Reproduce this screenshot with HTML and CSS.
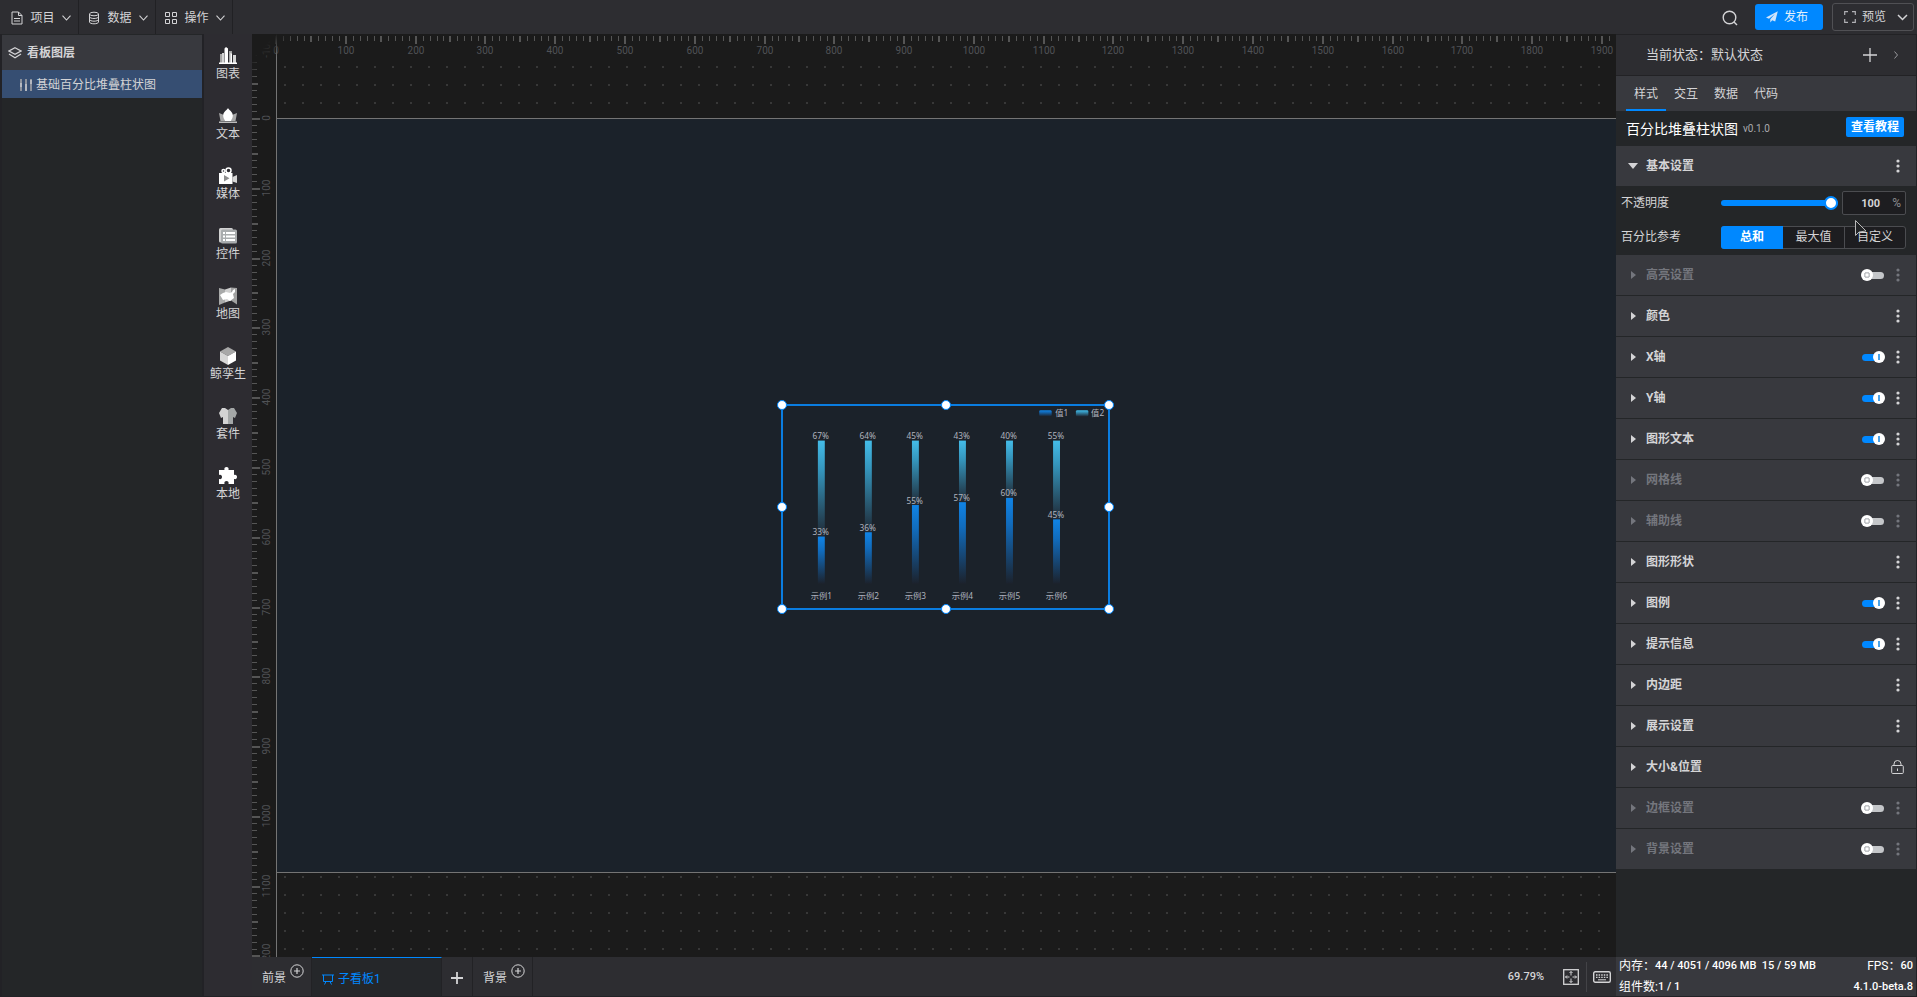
FILE: index.html
```html
<!DOCTYPE html>
<html lang="zh-CN">
<head>
<meta charset="utf-8">
<title>看板编辑器</title>
<link rel="stylesheet" href="styles.css">
</head>
<body>
<svg class="defs" width="0" height="0" aria-hidden="true">
  <defs>
    <symbol id="chevron" viewBox="0 0 9 6"><path d="M.5.7 4.5 5 8.5.7" fill="none" stroke="currentColor" stroke-width="1.1"/></symbol>
    <symbol id="more" viewBox="0 0 4 14"><circle cx="2" cy="2" r="1.6"/><circle cx="2" cy="7" r="1.6"/><circle cx="2" cy="12" r="1.6"/></symbol>
    <symbol id="plus-circle" viewBox="0 0 14 14"><g fill="none" stroke="currentColor"><circle cx="7" cy="7" r="6.2"/><path d="M7 4v6M4 7h6" stroke-width="1.2"/></g></symbol>
  </defs>
</svg>

<header class="topbar">
  <nav class="menus">
    <button class="menu"><svg width="12" height="14" viewBox="0 0 12 14" fill="none" stroke="currentColor"><path d="M1 1h6.5L11 4.5V13H1zM7.500 1v3.500H11M3 7.500h6M3 10h6"/></svg>项目<svg width="9" height="6"><use href="#chevron"/></svg></button>
    <button class="menu"><svg width="12" height="14" viewBox="0 0 12 14" fill="none" stroke="currentColor"><ellipse cx="6" cy="3" rx="4.500" ry="1.800"/><path d="M1.500 3v8c0 1 2 1.800 4.500 1.800s4.500-.8 4.500-1.800V3M1.500 5.700c0 1 2 1.800 4.500 1.800s4.500-.8 4.500-1.800M1.500 8.400c0 1 2 1.800 4.500 1.800s4.500-.8 4.500-1.800"/></svg>数据<svg width="9" height="6"><use href="#chevron"/></svg></button>
    <button class="menu"><svg width="12" height="12" viewBox="0 0 12 12" fill="none" stroke="currentColor"><path d="M.5.5h4v4h-4zM7.500.5h4v4h-4zM.5 7.500h4v4h-4zM7.500 7.500h4v4h-4z"/></svg>操作<svg width="9" height="6"><use href="#chevron"/></svg></button>
  </nav>
  <div class="actions">
    <button class="icon-btn" aria-label="搜索"><svg width="16" height="16" viewBox="0 0 16 16" fill="none" stroke="currentColor" stroke-width="1.400"><circle cx="7.500" cy="7.500" r="6.300"/><path d="m12 12 3 3"/></svg></button>
    <button class="publish"><svg width="12" height="12" viewBox="0 0 12 12" fill="#cfe4fa"><path d="M11.800.3 0 6.500l3 1.200 5.800-4.700-4.500 5.200v3.300l1.900-2.300 3 1.300z"/></svg>发布</button>
    <button class="preview"><svg width="12" height="12" viewBox="0 0 12 12" fill="none" stroke="#b0b0b4" stroke-width="1.200"><path d="M.7 4V.7H4M8 .7h3.300V4M11.300 8v3.300H8M4 11.300H.7V8"/></svg>预览<svg class="caret" width="11" height="7" viewBox="0 0 11 7" fill="none" stroke="currentColor" stroke-width="1.500"><path d="m1 1 4.500 4.500L10 1"/></svg></button>
  </div>
</header>

<main class="workspace">
  <aside class="layers">
    <h2 class="layers-title"><svg width="14" height="12" viewBox="0 0 14 12" fill="none" stroke="currentColor"><path d="M7 .8 13 4 7 7.300 1 4z M1 7l6 3.700L13 7" stroke-width="1.200"/></svg>看板图层</h2>
    <button class="layer"><svg width="12" height="12" viewBox="0 0 12 12"><path fill="#8b919c" d="M0 0h2v12H0zM5 0h2v12H5zM10 0h2v12h-2z"/><path fill="#b4b8c0" d="M0 4h2v4H0zM5 5h2v7H5zM10 1h2v4h-2z"/></svg>基础百分比堆叠柱状图</button>
  </aside>

  <nav class="rail">
    <button><svg width="18" height="18" viewBox="0 0 18 18"><path fill="#a5a5a5" d="M1 7h3v9H1zM10 4h3v12h-3z"/><path fill="#d5d5d5" d="M3 6h2v10H3zM14 8h3v8h-3z"/><path fill="#fff" d="M5.500 1.500 7 0l2 1.500V16H5.500zM11.500 5.500 13 7v9h-1.500zM0 15.500h18V17H0z"/></svg>图表</button>
    <button><svg width="18" height="18" viewBox="0 0 18 18"><path fill="#a8a8a8" d="m0 6 5 2 1 6H1.500zM18 6l-5 2-1 6h4.500z"/><path fill="#fff" d="M9 1c.8 2 4.800 3.500 4.800 7.500 0 2-.8 3.500-1.800 5.500H6c-1-2-1.800-3.500-1.800-5.500C4.200 4.500 8.200 3 9 1z"/><path fill="#bcbcbc" d="M0 14.500h18V16H0z"/></svg>文本</button>
    <button><svg width="18" height="18" viewBox="0 0 18 18"><g fill="none" stroke="#fff" stroke-width="1.500"><circle cx="4.500" cy="4" r="1.500"/><circle cx="9.500" cy="3.500" r="2.500"/></g><path fill="#fff" d="M0 6h13.500v11H0z"/><path fill="#d5d5d5" d="m13.500 10 4.500-2v8l-4.500-1.500z"/><path fill="#8d8d8d" d="m5 8 5.500 3.200L5 14.500z"/></svg>媒体</button>
    <button><svg width="18" height="18" viewBox="0 0 18 18"><rect y="1" width="14" height="14.500" rx="1.500" fill="#d2d2d2"/><rect x="2" y="2.500" width="16" height="14" rx="1.500" fill="#a9acad"/><path fill="#fff" d="M4 5h2v2H4zM7 5h9v2H7zM4 8.500h2v2H4zM7 8.500h9v2H7zM4 12h2v2H4zM7 12h9v2H7z"/></svg>控件</button>
    <button><svg width="18" height="18" viewBox="0 0 18 18"><path fill="#a9aaaa" d="m0 1 6 1.500v13L0 18z"/><path fill="#d0d0d0" d="m6 2.500 6-2v13l-6 2z"/><path fill="#a1a1a1" d="m12 .5 6 .5v16.500l-6-4z"/><path fill="#fff" d="m1 8 3-2 3-1 4 1 2-1 1-2 2-1v3l-2 2 1 4-4 3-3-2-4 1z"/></svg>地图</button>
    <button><svg width="18" height="18" viewBox="0 0 18 18"><path fill="#a8a8a8" d="m9 0 8 4.500L9 9 1 4.500z"/><path fill="#d6d6d6" d="M1 4.500 9 9v9l-8-4.500z"/><path fill="#fff" d="m17 4.500-8 4.500v9l8-4.500z"/></svg>鲸孪生</button>
    <button><svg width="18" height="18" viewBox="0 0 18 18"><path fill="#d3d3d3" d="m6 1 3 2v14H4V10L2 11 0 6l3-5z"/><path fill="#a4a7a7" d="m12 1-3 2v14h5V10l2 1 2-5-3-5z"/></svg>套件</button>
    <button><svg width="18" height="18" viewBox="0 0 18 18"><path fill="#fff" d="M0 3h5.500c-.6-2 .5-3 2-3s2.600 1 2 3H15v5c2-.6 3 .5 3 2s-1 2.600-3 2v5H9.500c.6-2-.5-3-2-3s-2.600 1-2 3H0v-5c2 .6 3-.5 3-2S2 7.400 0 8z"/></svg>本地</button>
  </nav>

  <section class="editor">
    <div class="stage">
      <div class="grid-dots"></div>
      <div class="artboard"></div>
      <svg class="ruler ruler-x" id="ruler-x" aria-hidden="true"></svg>
      <svg class="ruler ruler-y" id="ruler-y" aria-hidden="true"></svg>
      <div class="ruler-corner"></div>
      <div class="widget">
        <svg class="chart" id="chart" viewBox="0 0 469 292">
          <defs>
            <linearGradient id="g1" x1="0" y1="0" x2="0" y2="1"><stop offset="0" stop-color="#1084e6"/><stop offset=".3" stop-color="#116cbd"/><stop offset="1" stop-color="#1c222c"/></linearGradient>
            <linearGradient id="g2" x1="0" y1="0" x2="0" y2="1"><stop offset="0" stop-color="#44bce8"/><stop offset=".3" stop-color="#3596bd"/><stop offset="1" stop-color="#1f2834"/></linearGradient>
          </defs>
          <rect x="370" y="6" width="18" height="9" rx="2" fill="url(#g1)"/><text x="393" y="15">值1</text>
          <rect x="423" y="6" width="18" height="9" rx="2" fill="url(#g2)"/><text x="445" y="15">值2</text>
        </svg>
        <i class="handle nw"></i><i class="handle n"></i><i class="handle ne"></i>
        <i class="handle w"></i><i class="handle e"></i>
        <i class="handle sw"></i><i class="handle s"></i><i class="handle se"></i>
      </div>
    </div>
    <footer class="boards">
      <button class="board">前景<svg class="add" width="14" height="14"><use href="#plus-circle"/></svg></button>
      <button class="board current"><svg width="12" height="11" viewBox="0 0 12 11" fill="none" stroke="currentColor"><path d="M0 1h12M1.500 1v6.500h9V1M4 7.500 2.500 10.500M8 7.500l1.500 3"/></svg>子看板1</button>
      <button class="board new" aria-label="新建看板"><svg width="12" height="12" viewBox="0 0 12 12" stroke="currentColor" stroke-width="1.800"><path d="M6 0v12M0 6h12"/></svg></button>
      <button class="board">背景<svg class="add" width="14" height="14"><use href="#plus-circle"/></svg></button>
      <div class="view-tools">
        <span class="zoom">69.79%</span>
        <button class="icon-btn" aria-label="适应画布"><svg width="16" height="16" viewBox="0 0 16 16" fill="none" stroke="currentColor"><rect x=".7" y=".7" width="14.600" height="14.600" stroke-width="1.300"/><path d="M8 2.500v4M8 9.500v4M2.500 8h4M9.500 8h4M6.500 4 8 2.500 9.500 4M6.500 12 8 13.500 9.500 12M4 6.500 2.500 8 4 9.500M12 6.500 13.500 8 12 9.500"/></svg></button>
        <button class="icon-btn keys" aria-label="快捷键"><svg width="18" height="12" viewBox="0 0 18 12" fill="none" stroke="currentColor"><rect x=".7" y=".7" width="16.600" height="10.600" rx="1.500" stroke-width="1.400"/><path d="M3 4h12M3 6.300h12" stroke-width="1.300" stroke-dasharray="1.500 1.100"/><path d="M5 8.800h8"/></svg></button>
      </div>
    </footer>
  </section>

  <aside class="inspector">
    <div class="state"><span>当前状态：默认状态</span>
      <button class="icon-btn" aria-label="新增状态"><svg width="14" height="14" viewBox="0 0 14 14" stroke="currentColor" stroke-width="1.300"><path d="M7 0v14M0 7h14"/></svg></button>
      <button class="icon-btn" aria-label="下一状态"><svg width="4" height="8" viewBox="0 0 4 8" fill="none" stroke="#99999c"><path d="m.5.500 3 3.500-3 3.500"/></svg></button>
    </div>
    <nav class="tabs"><button class="active">样式</button><button>交互</button><button>数据</button><button>代码</button></nav>
    <div class="component"><h1>百分比堆叠柱状图</h1><span class="version">v0.1.0</span><button class="tutorial">查看教程</button></div>
    <div class="group open"><button class="group-name">基本设置</button><button class="more" aria-label="更多"><svg width="4" height="14"><use href="#more"/></svg></button></div>
    <div class="fields">
      <label for="opacity">不透明度</label>
      <div class="opacity"><input id="opacity" type="range" min="0" max="100" value="100"><div class="number"><input type="text" value="100" aria-label="不透明度数值"><span>%</span></div></div>
      <span>百分比参考</span>
      <div class="segmented"><button class="active">总和</button><button>最大值</button><button>自定义</button></div>
      <svg class="cursor" width="15" height="20" viewBox="0 0 15 20" aria-hidden="true"><path d="M1.500 1.500v15l3.500-3.500 7-1z" fill="#222426" stroke="#b9b9b9"/></svg>
    </div>
    <div class="groups" id="groups"></div>
    <dl class="stats">
      <div><dt>内存：</dt><dd>44 / 4051 / 4096 MB&nbsp; 15 / 59 MB</dd></div><div class="end"><dt>FPS：</dt><dd>60</dd></div>
      <div><dt>组件数:</dt><dd>1 / 1</dd></div><div class="end"><dd>4.1.0-beta.8</dd></div>
    </dl>
  </aside>
</main>
<script src="app.js"></script>
</body>
</html>
```
FILE: styles.css
```css
*, *::before, *::after { box-sizing: border-box; }
body {
  margin: 0;
  height: 100vh;
  display: flex;
  flex-direction: column;
  overflow: hidden;
  background: #222226;
  color: #d4d4d6;
  font: 12px/16px Roboto, "Noto Sans CJK SC", sans-serif;
}
button, input { font: inherit; color: inherit; }
button { background: none; border: 0; padding: 0; margin: 0; white-space: nowrap; }
svg { display: block; flex: none; }
svg:not([fill]) { fill: currentColor; }
h1, h2, dl, dd { margin: 0; }
.defs { position: absolute; }
.icon-btn { display: flex; align-items: center; justify-content: center; }

/* Top bar */
.topbar { display: flex; justify-content: space-between; flex: none; height: 34px; background: #2d2d31; }
.menus { display: flex; padding-left: 2px; }
.menu { display: flex; align-items: center; justify-content: center; gap: 7px; width: 77px; padding: 1px 0 0 2px; border-right: 1px solid #212124; }
.actions { display: flex; align-items: center; gap: 9px; padding-right: 3px; }
.actions .icon-btn { margin-right: 8px; padding-top: 2px; }
.publish, .preview { display: flex; align-items: center; gap: 6px; border-radius: 3px; }
.publish { width: 68px; height: 26px; padding-left: 11px; background: #0088ff; color: #e4f0fc; }
.preview { width: 82px; height: 28px; padding: 0 5px 0 11px; border: 1px solid #505054; }
.caret { margin-left: auto; }

.workspace { display: flex; flex: 1; min-height: 0; padding: 0 1px 1px 2px; }

/* Layers */
.layers { flex: none; width: 200px; background: #242628; padding-top: 1px; }
.layers-title { display: flex; align-items: center; gap: 5px; height: 35px; padding-left: 6px; background: #38393e; font-size: 12px; }
.layer { display: flex; align-items: center; gap: 4px; width: 100%; height: 28px; padding: 1px 0 0 18px; background: #364e72; }

/* Component rail */
.rail { display: flex; flex-direction: column; flex: none; width: 48px; margin-left: 2px; padding-top: 13px; background: #2d2c31; }
.rail button { display: flex; flex-direction: column; align-items: center; gap: 1px; height: 60px; }

/* Canvas */
.editor { display: flex; flex-direction: column; flex: 1; min-width: 0; }
.stage { position: relative; flex: 1; overflow: hidden; background: #1b1b1b; }
.grid-dots { position: absolute; inset: 24px 0 0 24px; background: radial-gradient(circle, #383838 1px, transparent 1px) 0 0 / 18px 18px; }
.artboard { position: absolute; left: 24px; top: 84px; width: 1342px; height: 755px; background: #1b222a; border: 1px solid #747474; }
.ruler { position: absolute; left: 0; top: 0; font-size: 10px; overflow: hidden; }
.ruler rect { fill: #555; }
.ruler text { fill: #505256; text-anchor: middle; }
.ruler-x { width: 100%; height: 24px; }
.ruler-y { width: 25px; height: 100%; border-right: 1px solid #747474; }
.ruler-corner { position: absolute; left: 0; top: 0; width: 48px; height: 48px; background: linear-gradient(135deg, #1b1b1b 25%, transparent 50%); }
.widget { position: absolute; left: 529px; top: 370px; width: 329px; height: 206px; border: 2px solid #0a7de0; }
.chart { width: 100%; height: 100%; }
.chart text { font: 12px "Noto Sans", "Noto Sans CJK SC", sans-serif; fill: #b0b3be; }
.chart .mid { text-anchor: middle; }
.handle { position: absolute; width: 10px; height: 10px; margin: -5px; border: 1px solid #0088ff; border-radius: 50%; background: #fff; }
.nw, .w, .sw { left: -1px; }
.n, .s { left: 50%; }
.ne, .e, .se { left: calc(100% + 1px); }
.nw, .n, .ne { top: -1px; }
.w, .e { top: 50%; }
.sw, .s, .se { top: calc(100% + 1px); }

/* Board tabs */
.boards { display: flex; flex: none; height: 39px; background: #2d2d31; }
.board { display: flex; align-items: center; gap: 4px; padding: 2px 7px 0 10px; border-right: 1px solid #222225; }
.board .add { margin-bottom: 14px; }
.board.current { gap: 4px; width: 130px; padding-top: 4px; border-top: 1px solid #0088ff; background: #25272a; color: #0088ff; }
.board.new { width: 31px; padding-left: 9px; }
.view-tools { display: flex; align-items: center; margin-left: auto; }
.zoom { margin-right: 19px; font-size: 11px; font-weight: 500; }
.view-tools .keys { height: 30px; margin-left: 7px; padding: 0 5px 0 6px; border-left: 1px solid #434347; }

/* Inspector */
.inspector { display: flex; flex-direction: column; flex: none; width: 300px; background: #242628; }
.state { display: flex; align-items: center; flex: none; height: 42px; padding: 0 18px 0 30px; border: solid #222225; border-width: 1px 0 1px; background: #2d2d31; font-size: 13px; }
.state span { flex: 1; }
.state .icon-btn + .icon-btn { margin-left: 17px; }
.tabs { display: flex; flex: none; height: 35px; padding-left: 10px; background: #38393e; }
.tabs button { width: 40px; padding-top: 2px; border-bottom: 2px solid transparent; }
.tabs .active { border-color: #0088ff; }
.component { display: flex; align-items: center; flex: none; height: 35px; padding: 0 12px 0 10px; color: #fff; }
.component h1 { font-size: 14px; font-weight: 400; }
.version { margin-left: 5px; font-size: 10px; color: #aaaaad; }
.tutorial { width: 58px; height: 20px; margin: 0 0 3px auto; border-radius: 2px; background: #0088ff; font-weight: 700; }
.group { display: flex; align-items: center; flex: none; height: 40px; padding: 0 16px 0 15px; background: #38393e; }
.group-name { display: flex; align-items: center; flex: 1; font-weight: 700; }
.group-name::before { content: ""; width: 5px; margin-right: 10px; border: solid transparent; border-width: 4px 0 4px 5px; border-left-color: currentColor; }
.open .group-name::before { width: 10px; margin: 0 8px 0 -3px; border-width: 6px 5px 0; border-color: currentColor transparent; }
.group.off .group-name, .group.off .more { color: #74767d; }
.group.locked { padding-right: 12px; }
.more { display: flex; }
.switch { appearance: none; position: relative; width: 24px; height: 12px; margin: 0 11px 0 0; }
.switch::before { content: ""; position: absolute; left: 6px; top: 3px; width: 17px; height: 7px; border-radius: 4px; background: #c4c6c9; }
.switch::after { content: ""; position: absolute; left: 0; top: 0; width: 12px; height: 12px; border-radius: 50%; background: radial-gradient(circle, #fff 1px, #c4c6c9 2px, #c4c6c9 3px, #fff 3px); }
.switch:checked::before { left: 1px; background: #0088ff; }
.switch:checked::after { left: 12px; background: linear-gradient(#4ba3e8, #4ba3e8) center / 2px 6px no-repeat #fff; }
.fields { position: relative; display: grid; grid-template-columns: 100px minmax(0, 1fr); align-items: center; grid-template-rows: 24px 24px; row-gap: 10px; flex: none; height: 69px; padding: 5px 10px 0 5px; }
.opacity { display: flex; align-items: center; gap: 4px; }
#opacity { appearance: none; flex: 1; min-width: 0; height: 14px; margin: 0; background: none; }
#opacity::-webkit-slider-runnable-track { height: 6px; border-radius: 3px; background: #0088ff; }
#opacity::-webkit-slider-thumb { appearance: none; width: 14px; height: 14px; margin-top: -4px; border: 2px solid #0088ff; border-radius: 50%; background: #fff; }
.number { display: flex; align-items: center; flex: none; width: 64px; height: 24px; padding-right: 4px; border: 1px solid #4b4c50; border-radius: 2px; background: #1d1d20; color: #8c8c90; }
.number input { flex: 1; min-width: 0; height: 22px; padding: 0 0 0 6px; border: 0; background: none; color: #d4d4d6; text-align: center; font-size: 11px; font-weight: 700; }
.segmented { display: grid; grid-template-columns: repeat(3, 1fr); height: 23px; border: 1px solid #4b4c50; border-radius: 3px; background: #1d1d20; }
.segmented button + button + button { border-left: 1px solid #4b4c50; }
.segmented .active { margin: -1px 0 -1px -1px; border-radius: 3px 0 0 3px; background: #0088ff; color: #fff; font-weight: 700; }
.cursor { position: absolute; left: 238px; top: 33px; }
.groups { display: flex; flex-direction: column; gap: 1px; flex: 1; min-height: 0; overflow: hidden; }
.stats { display: grid; grid-template-columns: 1fr auto; grid-template-rows: 17px 17px; align-content: center; row-gap: 4px; flex: none; height: 39px; padding: 0 3px; background: #38393e; color: #fff; }
.stats div { display: flex; }
.stats dd { font-size: 11px; font-weight: 500; }
.stats .end { justify-content: flex-end; }
```
FILE: app.js
```javascript
const NS = 'http://www.w3.org/2000/svg';
const ZOOM = 0.6979;

function add(parent, tag, attrs, text) {
  const el = document.createElementNS(NS, tag);
  for (const [key, value] of Object.entries(attrs)) el.setAttribute(key, value);
  if (text !== undefined) el.textContent = text;
  parent.appendChild(el);
}

// Rulers: one tick every 10 units, a label every 100
function drawRuler(ruler, from, to, vertical) {
  for (let unit = from; unit <= to; unit += 10) {
    const major = unit % 100 === 0;
    const size = major ? 8 : unit % 50 === 0 ? 6 : 5;
    const weight = unit % 50 === 0 ? 2 : 1;
    const pos = Math.round((vertical ? 84 : 24) + unit * ZOOM);
    add(ruler, 'rect', vertical
      ? { x: 0, y: pos, width: size, height: weight }
      : { x: pos - weight + 1, y: 2, width: weight, height: size });
    if (major) {
      add(ruler, 'text', vertical ? { transform: `translate(18 ${pos}) rotate(-90)` } : { x: pos, y: 20 }, unit);
    }
  }
}
drawRuler(document.getElementById('ruler-x'), 0, 1920, false);
drawRuler(document.getElementById('ruler-y'), -100, 1200, true);

// Stacked bars
const chart = document.getElementById('chart');
const TOP = 50, HEIGHT = 207;
[33, 36, 55, 57, 60, 45].forEach((value, i) => {
  const x = 55 + i * 68;
  const split = TOP + HEIGHT * (1 - value / 100);
  add(chart, 'rect', { x: x - 5, y: TOP, width: 10, height: split - TOP, fill: 'url(#g2)' });
  add(chart, 'rect', { x: x - 5, y: split, width: 10, height: TOP + HEIGHT - split, fill: 'url(#g1)' });
  add(chart, 'text', { class: 'mid', x: x - 1, y: TOP - 2 }, `${100 - value}%`);
  add(chart, 'text', { class: 'mid', x: x - 1, y: split - 2 }, `${value}%`);
  add(chart, 'text', { class: 'mid', x, y: 279 }, `示例${i + 1}`);
});

// Setting groups: [name, switch state]
const groups = [
  ['高亮设置', false], ['颜色'], ['X轴', true], ['Y轴', true], ['图形文本', true],
  ['网格线', false], ['辅助线', false], ['图形形状'], ['图例', true], ['提示信息', true],
  ['内边距'], ['展示设置'], ['大小&位置', 'lock'], ['边框设置', false], ['背景设置', false],
];
const moreIcon = '<svg width="4" height="14"><use href="#more"/></svg>';
const lockIcon = '<svg width="13" height="14" viewBox="0 0 13 14" fill="none" stroke="currentColor"><rect x=".7" y="5.500" width="11.600" height="8" rx="1"/><path d="M3 5.500V4a3.500 3.500 0 0 1 7 0v1.500M6.500 8.500v2.500"/></svg>';
document.getElementById('groups').innerHTML = groups.map(([name, state]) => {
  const locked = state === 'lock';
  const toggle = typeof state === 'boolean'
    ? `<input class="switch" type="checkbox" aria-label="${name}"${state ? ' checked' : ''}>` : '';
  return `<div class="group${state === false ? ' off' : ''}${locked ? ' locked' : ''}">
    <button class="group-name">${name.replace('&', '&amp;')}</button>${toggle}
    <button class="more" aria-label="${locked ? '锁定' : '更多'}">${locked ? lockIcon : moreIcon}</button></div>`;
}).join('');
```
